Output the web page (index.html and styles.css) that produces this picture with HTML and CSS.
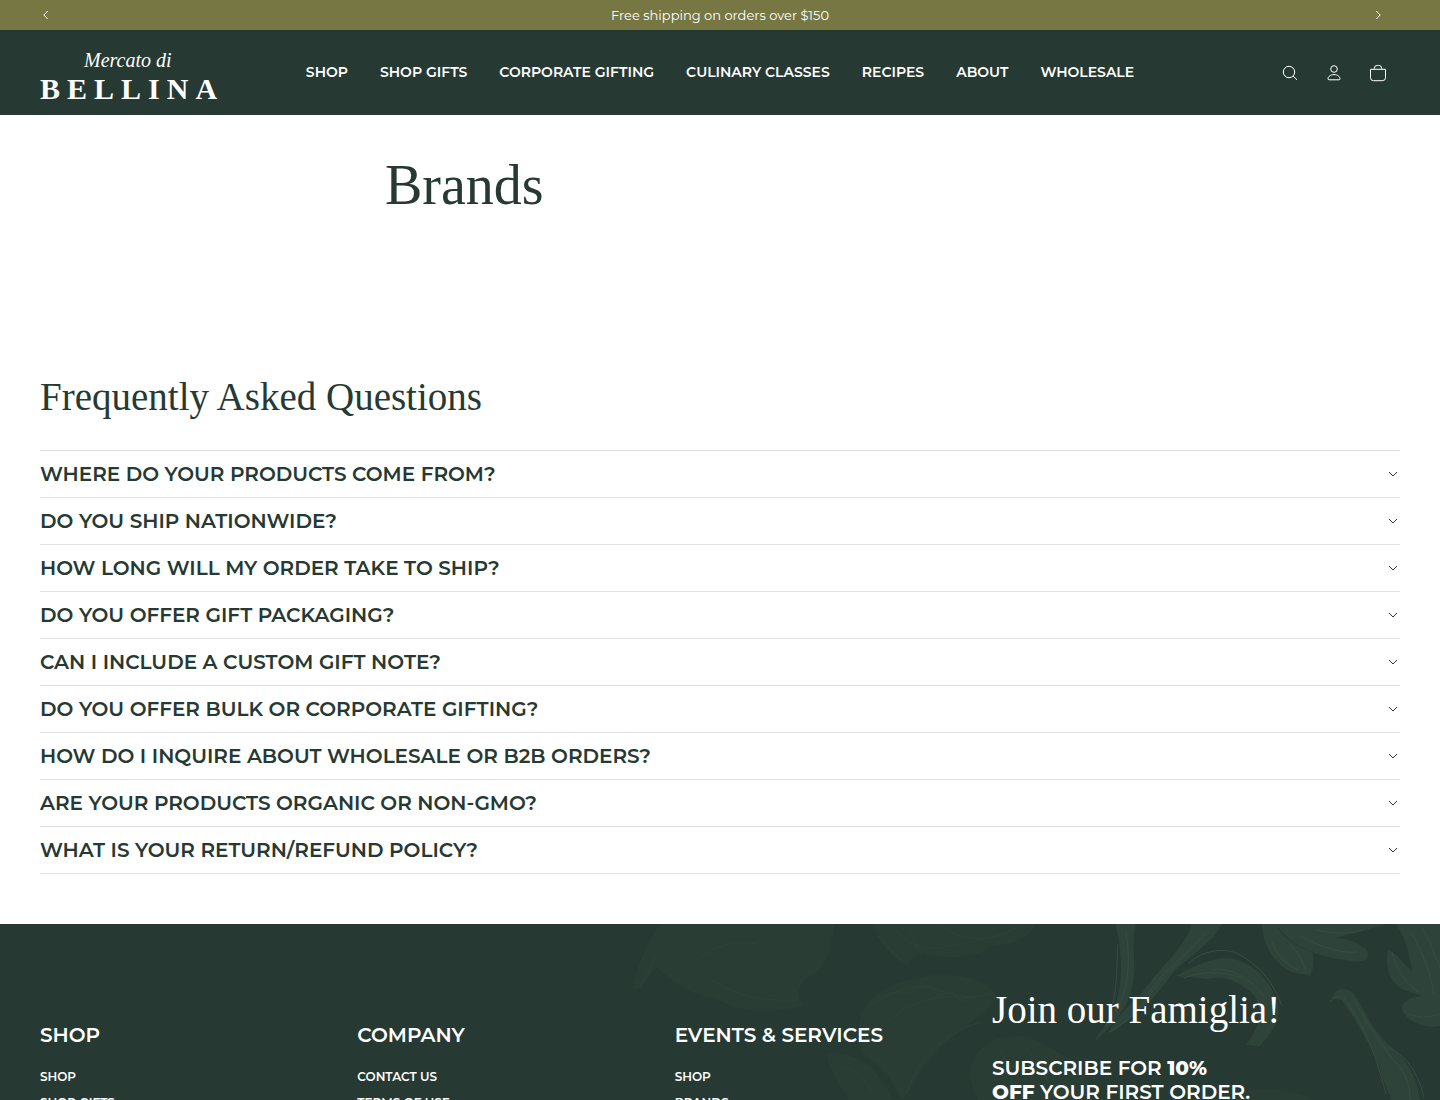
FILE: index.html
```html
<!DOCTYPE html>
<html lang="en">
<head>
    <meta charset="UTF-8">
    <meta name="viewport" content="width=device-width, initial-scale=1">
    <title>Brands | Mercato di Bellina</title>
    <link rel="stylesheet" href="styles.css">
</head>
<body>
    <div class="announcement">
        <button type="button" class="announcement_arrow" aria-label="Previous announcement">
            <svg viewBox="0 0 12 12"><path d="M7.8 2 3.8 6l4 4"/></svg>
        </button>
        <p>Free shipping on orders over $150</p>
        <button type="button" class="announcement_arrow next" aria-label="Next announcement">
            <svg viewBox="0 0 12 12"><path d="m4.2 2 4 4-4 4"/></svg>
        </button>
    </div>

    <header class="header">
        <a href="#" class="logo">
            <span class="logo_script">Mercato di</span>
            <span class="logo_name">BELLINA</span>
        </a>
        <nav class="nav">
            <a href="#">SHOP</a>
            <a href="#">SHOP GIFTS</a>
            <a href="#">CORPORATE GIFTING</a>
            <a href="#">CULINARY CLASSES</a>
            <a href="#">RECIPES</a>
            <a href="#">ABOUT</a>
            <a href="#">WHOLESALE</a>
        </nav>
        <div class="header_icons">
            <button type="button" aria-label="Search">
                <svg viewBox="0 0 20 20"><circle cx="9" cy="9" r="5.7"/><path d="m13.2 13.2 3.8 3.6"/></svg>
            </button>
            <a href="#" aria-label="Account">
                <svg viewBox="0 0 20 20"><circle cx="10" cy="6" r="3.3"/><path d="M10 11.6c-3.6 0-6 2-6 4.2 0 .6.4 1 1 1h10c.6 0 1-.4 1-1 0-2.200-2.400-4.200-6-4.200z"/></svg>
            </a>
            <button type="button" aria-label="Cart">
                <svg viewBox="0 0 20 20"><path d="M2.500 6.300h15v8.400a3 3 0 0 1-3 3h-9a3 3 0 0 1-3-3zM6.300 6.300V5.400a3 3 0 0 1 3-3h1.400a3 3 0 0 1 3 3v.9"/></svg>
            </button>
        </div>
    </header>

    <main>
        <section class="page_title">
            <h1>Brands</h1>
        </section>

        <section class="faq">
            <h2>Frequently Asked Questions</h2>
            <div class="faq_list">
                <details>
                    <summary>WHERE DO YOUR PRODUCTS COME FROM?<svg viewBox="0 0 14 14"><path d="m3 5 4 4 4-4"/></svg></summary>
                </details>
                <details>
                    <summary>DO YOU SHIP NATIONWIDE?<svg viewBox="0 0 14 14"><path d="m3 5 4 4 4-4"/></svg></summary>
                </details>
                <details>
                    <summary>HOW LONG WILL MY ORDER TAKE TO SHIP?<svg viewBox="0 0 14 14"><path d="m3 5 4 4 4-4"/></svg></summary>
                </details>
                <details>
                    <summary>DO YOU OFFER GIFT PACKAGING?<svg viewBox="0 0 14 14"><path d="m3 5 4 4 4-4"/></svg></summary>
                </details>
                <details>
                    <summary>CAN I INCLUDE A CUSTOM GIFT NOTE?<svg viewBox="0 0 14 14"><path d="m3 5 4 4 4-4"/></svg></summary>
                </details>
                <details>
                    <summary>DO YOU OFFER BULK OR CORPORATE GIFTING?<svg viewBox="0 0 14 14"><path d="m3 5 4 4 4-4"/></svg></summary>
                </details>
                <details>
                    <summary>HOW DO I INQUIRE ABOUT WHOLESALE OR B2B ORDERS?<svg viewBox="0 0 14 14"><path d="m3 5 4 4 4-4"/></svg></summary>
                </details>
                <details>
                    <summary>ARE YOUR PRODUCTS ORGANIC OR NON-GMO?<svg viewBox="0 0 14 14"><path d="m3 5 4 4 4-4"/></svg></summary>
                </details>
                <details>
                    <summary>WHAT IS YOUR RETURN/REFUND POLICY?<svg viewBox="0 0 14 14"><path d="m3 5 4 4 4-4"/></svg></summary>
                </details>
            </div>
        </section>
    </main>

    <footer class="footer">
        <!-- flowers and leaves behind the columns -->
        <svg class="footer_art" viewBox="0 0 840 176" aria-hidden="true">
            <g class="petal_faint">
                <path d="M60 0c-14 20-22 40-28 64 8 6 16-12 24-20 20 14 36 30 60 30 20 16 60 14 88 8-10-12-4-24 6-30 20-10 22-34 24-52z"/>
                <path d="M272 0c6 20 22 34 36 42 4-8 8-10 14-12 22 6 60 4 68-8 20 0 42-8 46-22z"/>
                <path d="M258 104c2-26 26-44 58-50 30-8 66-2 80 16 2 8-16 20-26 30-22 16-44 34-56 60l-12 16c-10-18-16-30-30-40-12-8-16-16-14-32z"/>
                <path d="M226 130c14-2 34 2 46 14 10 12 18 22 20 32h-42c-12-16-20-30-24-46zM380 126c14-16 40-18 60-8l32 18c16 14 18 28 20 40H378c-10-18-12-36 2-50z"/>
                <path d="M640 168c24-6 56-2 76 8h-90z"/>
            </g>
            <g class="petal">
                <path d="M516 0c6 30 8 58-2 84-4 14-14 22-20 34 16-14 34-34 38-54 6-22-2-44 4-64z"/>
                <path d="M592 0c-8 24-28 40-42 58-10 16-34 32-42 52 24-14 46-34 64-60 16-18 40-30 50-50z"/>
                <path d="M576 52c22-12 42-22 62-16 20 8 32 20 40 44 4 20-8 28-18 42l-14-1c14-20 18-34 8-50-16-14-30-20-46-16z"/>
                <path d="M662 0c0 20 12 38 26 46 8 6 16 2 22 6 4-6 4-18 2-24-16-6-30-14-36-28z"/>
                <path d="M676 0c14 24 48 34 70 36 8 2 24 4 22-8-6-8-20-14-32-14l50-14z"/>
                <path d="M796 0c12 18 14 34 16 48-10-10-14-18-24-22-4 14 2 34 16 40l18 6c-20 2-24 12-16 20 10 10 24 12 34 10V0z"/>
                <path d="M732 74c4-10 14-12 22-4 12 18 18 36 36 52 18 14 26 30 30 54h-28c-10-20-12-34-20-50-10-18-20-36-30-50-2 0-4 0-10-2z"/>
            </g>
            <g class="vein_faint">
                <path d="M278 12c16 18 20 24 30 30M296 6c18 22 40 20 62 14M340 0c18 18 52 20 78 2M310 4c2 12 6 20 12 26"/>
                <path d="M262 90c20-22 54-32 76-24s36 8 52 4M276 108c24-20 40-40 94-34M306 170c14-40 40-60 74-72M242 142c12 4 22 12 30 26M396 138c18 2 36 12 52 32"/>
                <path d="M290 70c10-4 16 4 24-4s14-6 20 2 16-4 22 4 14 4 22 0M400 126c8 12 12 28 14 50M424 122c14 14 24 30 30 54"/>
                <path d="M58 30c-8 10-12 24-18 34M92 42c16-18 36-26 64-22M112 56c20 14 50 22 84 20"/>
            </g>
            <g class="vein">
                <path d="M526 8c4 28 4 52-10 80M518 20c-2 32 0 50-12 82M606 8c-20 26-40 40-54 60s-26 30-42 40M592 22c-14 16-30 26-44 48"/>
                <path d="M588 40c14-14 38-18 54-8 20 12 32 28 40 50M584 54c20-8 42-6 58 0M612 46c16-4 38 8 52 26"/>
                <path d="M672 18c4 12 10 20 26 28M690 20c8 8 14 18 16 30M700 12c20 10 40 18 58 16M716 6c18 4 36 4 48 0"/>
                <path d="M792 28c4 16 12 30 26 40M812 10c12 20 18 40 22 60M822 4c8 12 14 30 18 40M808 90c12 4 20 4 32 0"/>
                <path d="M730 78c4-6 10-6 16-4M744 74c18 24 30 50 42 96M756 78c10 22 24 38 34 54 14 14 20 26 20 44M790 124c16 8 28 24 34 50"/>
            </g>
        </svg>
        <div class="footer_inner">
            <div class="footer_col">
                <h3>SHOP</h3>
                <ul>
                    <li><a href="#">SHOP</a></li>
                    <li><a href="#">SHOP GIFTS</a></li>
                </ul>
            </div>
            <div class="footer_col">
                <h3>COMPANY</h3>
                <ul>
                    <li><a href="#">CONTACT US</a></li>
                    <li><a href="#">TERMS OF USE</a></li>
                </ul>
            </div>
            <div class="footer_col">
                <h3>EVENTS &amp; SERVICES</h3>
                <ul>
                    <li><a href="#">SHOP</a></li>
                    <li><a href="#">BRANDS</a></li>
                </ul>
            </div>
            <div class="footer_join">
                <h2>Join our Famiglia!</h2>
                <p>SUBSCRIBE FOR <strong>10%<br>OFF</strong> YOUR FIRST ORDER.</p>
            </div>
        </div>
    </footer>
</body>
</html>
```
FILE: styles.css
```css
* {
    box-sizing: border-box;
    padding: 0;
    margin: 0;
}
body {
    font-family: Montserrat, Inter, sans-serif;
    color: #263932;
    background-color: #fff;
}
a {
    color: inherit;
    text-decoration: none;
}
button {
    border: 0;
    background: none;
    color: inherit;
    cursor: pointer;
}
svg {
    fill: none;
    stroke: currentColor;
}
h1,
h2 {
    font-family: "Liberation Serif", serif;
    font-weight: 400;
}

/* announcement */
.announcement {
    display: grid;
    grid-template-columns: 1fr auto 1fr;
    align-items: center;
    height: 30px;
    padding: 0 40px;
    background-color: #777743;
    color: #fff;
    font-size: 13px;
}
.announcement_arrow {
    display: flex;
}
.announcement_arrow.next {
    justify-self: end;
    margin-right: 16px;
}
.announcement_arrow svg {
    width: 12px;
    height: 12px;
}

/* header */
.header {
    display: grid;
    grid-template-columns: 1fr auto 1fr;
    align-items: center;
    height: 85px;
    padding: 0 40px;
    background-color: #263932;
    color: #fff;
}
.logo {
    display: flex;
    flex-direction: column;
    width: 178px;
    padding-top: 6px;
    font-family: "Liberation Serif", serif;
}
.logo_script {
    padding-left: 44px;
    font-size: 20px;
    font-style: italic;
    line-height: 26px;
}
.logo_name {
    font-size: 30px;
    font-weight: 700;
    line-height: 32px;
    letter-spacing: 7px;
}
.nav {
    display: flex;
    gap: 32px;
    padding-bottom: 2px;
    font-size: 14px;
    font-weight: 600;
    white-space: nowrap;
}
.header_icons {
    display: flex;
    justify-content: flex-end;
}
.header_icons a,
.header_icons button {
    display: flex;
    align-items: center;
    justify-content: center;
    width: 44px;
    height: 44px;
}
.header_icons svg {
    width: 20px;
    height: 20px;
}

/* page title */
.page_title {
    max-width: 670px;
    margin: 0 auto;
    padding: 38px 0 78px;
}
.page_title h1 {
    font-size: 56px;
    line-height: 64px;
}

/* faq */
.faq {
    padding: 78px 40px 50px;
}
.faq h2 {
    margin-bottom: 29px;
    font-size: 39px;
    line-height: 48px;
}
.faq_list {
    border-top: 1px solid #dfe1e0;
}
.faq_list details {
    border-bottom: 1px solid #dfe1e0;
}
.faq_list summary {
    display: flex;
    align-items: center;
    justify-content: space-between;
    height: 46px;
    font-size: 20px;
    font-weight: 600;
    list-style: none;
    cursor: pointer;
}
.faq_list svg {
    width: 14px;
    height: 14px;
}

/* footer */
.footer {
    position: relative;
    overflow: hidden;
    background-color: #263932;
    color: #fff;
}
.footer_art {
    position: absolute;
    top: 0;
    right: 0;
    width: 840px;
    height: 176px;
    stroke: none;
}
.petal_faint {
    fill: #293d35;
}
.petal {
    fill: #2e443b;
}
.vein,
.vein_faint {
    fill: none;
    stroke: #374d44;
}
.vein_faint {
    stroke: #2d4239;
}
.footer_inner {
    position: relative;
    display: grid;
    grid-template-columns: 7fr 7fr 7fr 9fr;
    padding: 62px 40px 0;
}
.footer_col {
    padding-top: 36px;
}
.footer_col h3 {
    margin-bottom: 16px;
    font-size: 20px;
    font-weight: 600;
    line-height: 26px;
}
.footer_col ul {
    list-style: none;
}
.footer_col li {
    font-size: 12px;
    font-weight: 600;
    line-height: 26px;
}
.footer_join h2 {
    margin-bottom: 22px;
    font-size: 39px;
    line-height: 48px;
}
.footer_join p {
    font-size: 20px;
    font-weight: 600;
    line-height: 24px;
}
.footer_join strong {
    font-weight: 800;
}
```
